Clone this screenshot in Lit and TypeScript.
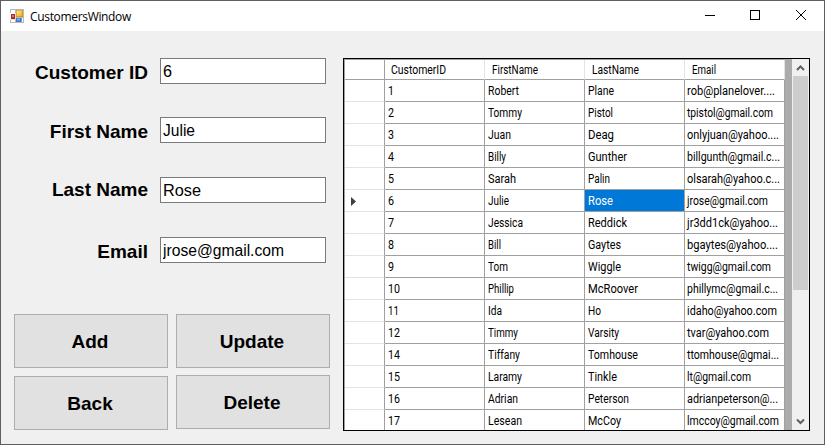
import { LitElement, html, css, svg } from "lit";
import { customElement } from "lit/decorators.js";
import { classMap } from "lit/directives/class-map.js";

// Each cell holds its text and the width the text occupies in the grid font.
type Cell = [string, number];

const COLUMNS: Cell[] = [["CustomerID", 55], ["FirstName", 46], ["LastName", 47], ["Email", 24]];

const ROWS: Cell[][] = [
  [["1", 6], ["Robert", 31], ["Plane", 26], ["rob@planelover....", 88]],
  [["2", 6], ["Tommy", 34], ["Pistol", 25], ["tpistol@gmail.com", 86]],
  [["3", 6], ["Juan", 23], ["Deag", 26], ["onlyjuan@yahoo....", 92]],
  [["4", 6], ["Billy", 18], ["Gunther", 39], ["billgunth@gmail.c...", 93]],
  [["5", 6], ["Sarah", 28], ["Palin", 22], ["olsarah@yahoo.c...", 93]],
  [["6", 6], ["Julie", 21], ["Rose", 25], ["jrose@gmail.com", 81]],
  [["7", 6], ["Jessica", 35], ["Reddick", 39], ["jr3dd1ck@yahoo...", 91]],
  [["8", 6], ["Bill", 13], ["Gaytes", 33], ["bgaytes@yahoo....", 91]],
  [["9", 6], ["Tom", 20], ["Wiggle", 33], ["twigg@gmail.com", 84]],
  [["10", 12], ["Phillip", 26], ["McRoover", 50], ["phillymc@gmail.c...", 91]],
  [["11", 11], ["Ida", 14], ["Ho", 13], ["idaho@yahoo.com", 90]],
  [["12", 12], ["Timmy", 30], ["Varsity", 31], ["tvar@yahoo.com", 82]],
  [["14", 12], ["Tiffany", 32], ["Tomhouse", 50], ["ttomhouse@gmai...", 92]],
  [["15", 12], ["Laramy", 34], ["Tinkle", 29], ["lt@gmail.com", 64]],
  [["16", 12], ["Adrian", 30], ["Peterson", 41], ["adrianpeterson@...", 91]],
  [["17", 12], ["Lesean", 34], ["McCoy", 33], ["lmccoy@gmail.com", 92]],
];

const FIELDS = [
  { label: "Customer ID", value: "6", width: 9, cls: "f1" },
  { label: "First Name", value: "Julie", width: 32, cls: "f2" },
  { label: "Last Name", value: "Rose", width: 38, cls: "f3" },
  { label: "Email", value: "jrose@gmail.com", width: 121, cls: "f4" },
];

const fitted = ([text, width]: Cell) => html`<svg class="txt" width="96" height="18">
  ${svg`<text x="0" y="14" textLength=${width} lengthAdjust="spacingAndGlyphs">${text}</text>`}
</svg>`;

@customElement("customer-grid")
export class CustomerGrid extends LitElement {
  static styles = css`
    :host { display: flex; box-sizing: border-box; width: 467px; height: 373px; border: 1px solid #000; background: #ababab; overflow: hidden; font-family: Roboto, "Liberation Sans", sans-serif; font-size: 12px; color: #000; }
    .table { box-sizing: border-box; width: 441px; flex: none; border-left: 1px solid #a0a0a0; border-top: 1px solid #a0a0a0; }
    .row { display: grid; grid-template-columns: 40px repeat(4, 100px); grid-auto-rows: 22px; }
    .head { grid-auto-rows: 20px; }
    .cell { box-sizing: border-box; border-right: 1px solid #a0a0a0; border-bottom: 1px solid #a0a0a0; background: #fff; padding-left: 3px; }
    .cell:last-child { padding-left: 2px; }
    .head .cell { border-right-color: #e3e3e3; padding-left: 7px; }
    .head .cell:nth-child(2) { padding-left: 6px; }
    .cell.rh { padding-left: 6px; border-bottom-color: #e3e3e3; }
    .head .cell.rh { border-right-color: #a0a0a0; border-bottom-color: #a0a0a0; }
    .sel { background: #0078d7; color: #fff; }
    .txt { display: block; margin-top: 1px; fill: currentColor; overflow: visible; }
    .head .txt { margin-top: 0; }
    .mark { display: block; margin-top: 7px; }
    .bar { margin-left: auto; width: 17px; background: #f0f0f0; display: flex; flex-direction: column; }
    .arrow { display: block; flex: none; }
    .thumb { height: 214px; margin: 0 1px; background: #cdcdcd; }
    .gap { flex: 1; }
  `;

  render() {
    return html`
      <div class="table">
        <div class="row head"><div class="cell rh"></div>${COLUMNS.map((c) => html`<div class="cell">${fitted(c)}</div>`)}</div>
        ${ROWS.map((r, i) => html`<div class="row">
          <div class="cell rh">${i === 5 ? html`<svg class="mark" width="6" height="9" viewBox="0 0 6 9"><path d="M0 0L5 4.5L0 9Z" fill="#404040"/></svg>` : ""}</div>
          ${r.map((c, j) => html`<div class=${classMap({ cell: true, sel: i === 5 && j === 2 })}>${fitted(c)}</div>`)}
        </div>`)}
      </div>
      <div class="bar">
        <svg class="arrow" width="17" height="17"><path d="M5 11L8.5 7.5L12 11" fill="none" stroke="#606060" stroke-width="2"/></svg>
        <div class="thumb"></div><div class="gap"></div>
        <svg class="arrow" width="17" height="17"><path d="M5 6.5L8.5 10L12 6.5" fill="none" stroke="#606060" stroke-width="2"/></svg>
      </div>`;
  }
}

@customElement("app-root")
export class AppRoot extends LitElement {
  static styles = css`
    :host { display: flex; flex-direction: column; box-sizing: border-box; width: 825px; height: 445px; border: 1px solid #5c5f66; background: #f0f0f0; overflow: hidden; color: #000; font-family: "Liberation Sans", Arial, sans-serif; }
    .title { display: flex; align-items: center; height: 30px; background: #fff; flex: none; }
    .logo { margin-left: 9px; margin-right: 6px; flex: none; }
    .name { font-family: "Open Sans", sans-serif; font-size: 12px; letter-spacing: -0.33px; flex: 1; }
    .controls { flex: none; }
    .body { display: flex; padding: 27px 0 0 13px; }
    .left { width: 316px; margin-right: 13px; }
    .form { height: 256px; }
    .field { display: flex; justify-content: flex-end; height: 26px; padding-right: 4px; margin-bottom: 34px; }
    .f1 { margin-bottom: 33px; }
    .label { font-size: 19px; font-weight: bold; line-height: 26px; margin-right: 12px; padding-top: 2px; }
    .f3 .label { padding-top: 0; }
    .f4 .label { padding-top: 2px; }
    .input { box-sizing: border-box; width: 166px; height: 26px; border: 1px solid #7a7a7a; background: #fff; padding-left: 2px; }
    .buttons { display: grid; grid-template-columns: 154px 154px; column-gap: 8px; row-gap: 8px; grid-auto-rows: 54px; }
    .btn { box-sizing: border-box; border: 1px solid #adadad; background: #e1e1e1; padding: 1px 2px 0 0; font: bold 19px "Liberation Sans", Arial, sans-serif; color: #000; height: 54px; width: 154px; }
    .raised { margin-top: -1px; }
  `;

  render() {
    return html`
      <div class="title">
        <svg class="logo" width="14" height="14" viewBox="0 0 14 14">
          <defs>
            <linearGradient id="y" x1="0" y1="0" x2="1" y2="1"><stop offset="0" stop-color="#ffe99a"/><stop offset="1" stop-color="#efa90c"/></linearGradient>
          </defs>
          <path d="M0 0H14V14H0Z" fill="#b9b9b9"/>
          <path d="M1 1H5V4H1ZM1 11H5V13H1ZM12 9H13V13H12Z" fill="#fff"/>
          <rect x="0" y="4" width="5.5" height="6.5" fill="#fff"/>
          <rect x="1" y="5" width="4" height="5" fill="#b02a22"/><rect x="2" y="6" width="2" height="2" fill="#e07060"/>
          <rect x="6" y="1" width="7" height="7" fill="#b8860b"/><rect x="6.5" y="1.5" width="6" height="6" fill="url(#y)"/>
          <rect x="6" y="9" width="5.5" height="4" fill="#3d77d0"/><rect x="7" y="9.5" width="3" height="2" fill="#7daef0"/>
        </svg>
        <span class="name">CustomersWindow</span>
        <svg class="controls" width="138" height="30">
          <path d="M19 14.5H29" stroke="#000" fill="none"/>
          <rect x="64.5" y="9.5" width="9" height="9" stroke="#000" fill="none"/>
          <path d="M110 9L120 19M120 9L110 19" stroke="#000" fill="none"/>
        </svg>
      </div>
      <div class="body">
        <div class="left">
          <div class="form">
            ${FIELDS.map((f) => html`<div class="field ${f.cls}"><span class="label">${f.label}</span>
              <div class="input"><svg width="160" height="24"><text x="0" y="18" font-size="16" textLength=${f.width} lengthAdjust="spacingAndGlyphs">${f.value}</text></svg></div></div>`)}
          </div>
          <div class="buttons">
            <button class="btn">Add</button><button class="btn">Update</button>
            <button class="btn">Back</button><button class="btn raised">Delete</button>
          </div>
        </div>
        <customer-grid></customer-grid>
      </div>`;
  }
}
